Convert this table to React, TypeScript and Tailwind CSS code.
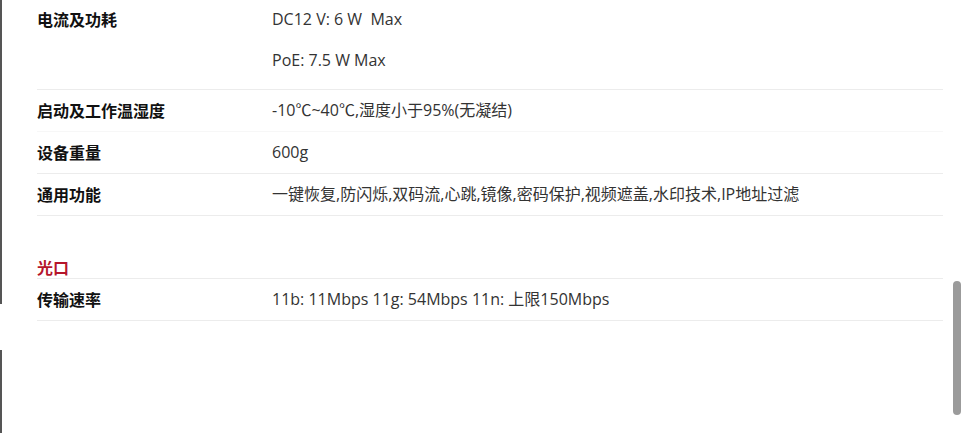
import React from 'react';

interface SpecRow {
  label: string;
  values: string[];
  faint?: boolean;
}

const powerRows: SpecRow[] = [
  { label: '电流及功耗', values: ['DC12 V: 6 W\u00a0 Max', 'PoE: 7.5 W Max'] },
  { label: '启动及工作温湿度', values: ['-10℃~40℃,湿度小于95%(无凝结)'], faint: true },
  { label: '设备重量', values: ['600g'] },
  { label: '通用功能', values: ['一键恢复,防闪烁,双码流,心跳,镜像,密码保护,视频遮盖,水印技术,IP地址过滤'] },
];

const portRows: SpecRow[] = [
  { label: '传输速率', values: ['11b: 11Mbps 11g: 54Mbps 11n: 上限150Mbps'] },
];

const labelFont = { fontFamily: '"Noto Sans CJK SC", "Noto Sans", sans-serif' };
const valueFont = { fontFamily: '"Open Sans", "Noto Sans CJK SC", sans-serif' };

const Row: React.FC<{ row: SpecRow }> = ({ row }) => {
  const multi = row.values.length > 1;
  return (
    <div
      className={`flex border-b ${row.faint ? 'border-[#f7f7f7]' : 'border-[#ececec]'} ${
        multi ? 'pt-[8px] pb-[18px]' : 'pt-[9px] pb-[10px]'
      }`}
    >
      <div className="w-[235px] shrink-0 text-[16px] leading-[22px] font-bold text-[#111]" style={labelFont}>
        {row.label}
      </div>
      <div className="flex flex-col gap-[19px] text-[16px] leading-[22px] text-[#333]" style={valueFont}>
        {row.values.map((v) => (
          <p key={v}>{v}</p>
        ))}
      </div>
    </div>
  );
};

export default function App() {
  return (
    <div className="flex h-[433px] w-[961px] overflow-hidden bg-white">
      {/* window edge */}
      <div className="flex w-[2px] shrink-0 flex-col">
        <div className="h-[304px] bg-[#555]" />
        <div className="h-[46px] bg-white" />
        <div className="flex-1 bg-[#555]" />
      </div>

      <div className="w-[941px] shrink-0 pl-[35px]">
        {powerRows.map((r) => (
          <Row key={r.label} row={r} />
        ))}

        <h3
          className="mt-[40px] border-b border-[#ececec] text-[16px] leading-[22px] font-bold text-[#b5152b]"
          style={labelFont}
        >
          光口
        </h3>
        {portRows.map((r) => (
          <Row key={r.label} row={r} />
        ))}
      </div>

      {/* scrollbar */}
      <div className="ml-[10px] w-[8px] shrink-0 pt-[281px]">
        <div className="h-[134px] rounded-full bg-[#9b9b9b]" />
      </div>
    </div>
  );
}
